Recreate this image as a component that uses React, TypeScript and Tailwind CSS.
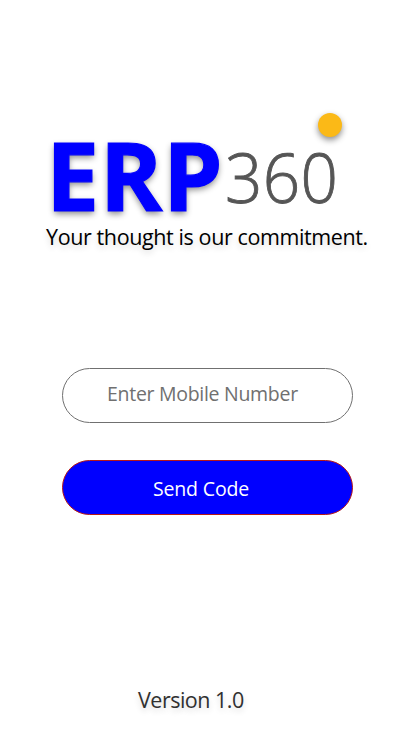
const App = () => {
  return (
    <div className="flex h-[736px] w-[414px] flex-col bg-white font-['Open_Sans',sans-serif]">
      {/* brand */}
      <div className="relative mt-[128px] flex h-[92px] pl-[46px]">
        <h1 className="w-[179px] whitespace-nowrap text-[95px] font-bold leading-[92px] tracking-[0.6px] text-[#0000ff] [-webkit-text-stroke:1.2px_#0000ff] [text-shadow:0_3px_6px_rgba(0,0,0,0.45)]">
          ERP
        </h1>
        <span className="mt-[3px] origin-left scale-x-[0.95] text-[69px] font-light leading-[91px] tracking-[0.4px] text-[#565656] [-webkit-text-stroke:0.9px_#565656]">
          360
        </span>
        <span className="absolute -top-[15px] left-[318px] size-6 rounded-full bg-[#fbb917] shadow-[0_3px_6px_rgba(0,0,0,0.45)]" />
      </div>
      <p className="mt-[2px] h-[31px] whitespace-nowrap pl-[46px] text-[21.5px] leading-[30px] tracking-[-0.39px] text-black [text-shadow:0_3px_6px_rgba(0,0,0,0.16)]">
        Your thought is our commitment.
      </p>
      {/* login form */}
      <form className="mt-[115px] flex flex-col gap-[37px] pl-[62px]">
        <input
          type="tel"
          placeholder="Enter Mobile Number"
          className="h-[55px] w-[291px] rounded-full border border-[#707070] pb-1 pl-[44px] text-[19.5px] tracking-[-0.29px] placeholder:text-[#707070]"
        />
        <button
          type="button"
          className="h-[55px] w-[291px] rounded-full border border-[#b51717] bg-[#0000ff] pr-[13px] pt-[3px] text-[19.5px] tracking-[-0.15px] text-white"
        >
          Send Code
        </button>
      </form>
      <p className="mt-[170px] pl-[138px] text-[21.5px] leading-[30px] tracking-[-0.5px] text-[#303030] [text-shadow:0_3px_6px_rgba(0,0,0,0.16)]">
        Version 1.0
      </p>
    </div>
  );
};

export default App;
